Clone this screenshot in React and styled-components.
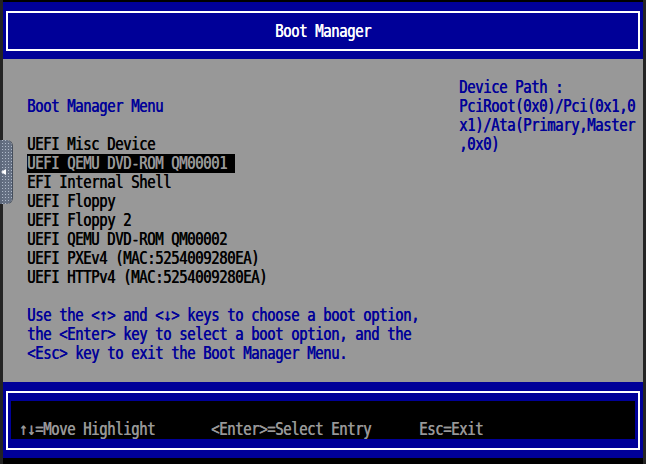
import React from "react";
import styled, { createGlobalStyle } from "styled-components";

const BLUE = "#000098";
const GRAY = "#989898";

const Global = createGlobalStyle`
  html, body { margin: 0; padding: 0; background: #242424; }
  body { width: 646px; height: 464px; overflow: hidden; }
`;

const Viewport = styled.div`
  width: 646px;
  height: 464px;
  padding-left: 3px;
  box-sizing: border-box;
  background: #242424;
  position: relative;
`;

const Screen = styled.div`
  width: 640px;
  height: 464px;
  box-sizing: border-box;
  padding-top: 2px;
  background: #000;
  display: flex;
  flex-direction: column;
  font-family: "DejaVu Sans Mono", "Liberation Mono", monospace;
  font-size: 14px;
  letter-spacing: -0.428px;
`;

const Header = styled.header`
  background: ${BLUE};
  padding: 9px 3px 8px 3px;
`;

const Frame = styled.div`
  border: 2px solid #fff;
  box-sizing: border-box;
  height: ${(p) => p.$h}px;
  display: flex;
  flex-direction: column;
  align-items: ${(p) => (p.$center ? "center" : "stretch")};
  justify-content: center;
  padding: ${(p) => p.$pad || "0"};
`;

const Glyphs = styled.span`
  display: inline-block;
  white-space: pre;
  text-shadow: 0.55px 0 0 currentColor;
  transform: translateY(-0.6px) scaleY(1.27);
  transform-origin: 50% 50%;
`;

const Line = styled.div`
  height: 19px;
  line-height: 19px;
  white-space: pre;
  width: fit-content;
  color: ${(p) => p.$color || "#000"};
  background: ${(p) => p.$bg || "transparent"};
`;

const Main = styled.main`
  background: ${GRAY};
  height: 323px;
  box-sizing: border-box;
  padding-left: 24px;
  display: grid;
  grid-template-columns: 432px 176px;
  align-items: start;
`;

const LeftCol = styled.section`
  padding-top: 38px;
  display: flex;
  flex-direction: column;
`;

const RightCol = styled.aside`
  padding-top: 19px;
  display: flex;
  flex-direction: column;
`;

const Spacer = styled.div`
  height: ${(p) => p.$rows * 19}px;
`;

const Footer = styled.footer`
  background: ${BLUE};
  padding: 9px 3px 8px 3px;
`;

const KeyBar = styled.div`
  background: #000;
  height: 38px;
  padding: 19px 0 0 8px;
  box-sizing: border-box;
  display: grid;
  grid-template-columns: 192px 208px auto;
`;

const Handle = styled.div`
  position: absolute;
  left: 0;
  top: 140px;
  width: 12px;
  height: 64px;
  border-radius: 0 6px 6px 0;
  background-color: rgba(98, 110, 130, 0.95);
  background-image: radial-gradient(circle, rgba(190, 200, 215, 0.85) 0.7px, transparent 1px);
  background-size: 3px 3px;
  background-position: 1px 2px;
  box-shadow: 1px 0 0 rgba(60, 70, 85, 0.9);
  display: flex;
  align-items: center;
  justify-content: flex-start;
`;

const HandleArrow = styled.svg`
  width: 7px;
  height: 8px;
`;

const T = ({ children, color, bg }) => (
  <Line $color={color} $bg={bg}>
    <Glyphs>{children}</Glyphs>
  </Line>
);

const items = [
  "UEFI Misc Device",
  "UEFI QEMU DVD-ROM QM00001",
  "EFI Internal Shell",
  "UEFI Floppy",
  "UEFI Floppy 2",
  "UEFI QEMU DVD-ROM QM00002",
  "UEFI PXEv4 (MAC:5254009280EA)",
  "UEFI HTTPv4 (MAC:5254009280EA)",
];

const help = [
  "Use the <\u2191> and <\u2193> keys to choose a boot option,",
  "the <Enter> key to select a boot option, and the",
  "<Esc> key to exit the Boot Manager Menu.",
];

const devicePath = [
  "Device Path :",
  "PciRoot(0x0)/Pci(0x1,0",
  "x1)/Ata(Primary,Master",
  ",0x0)",
];

const keys = ["\u2191\u2193=Move Highlight", "<Enter>=Select Entry", "Esc=Exit"];

export default function App() {
  const selected = 1;
  return (
    <>
      <Global />
      <Viewport>
        <Screen>
          <Header>
            <Frame $h={40} $center>
              <T color="#fff">Boot Manager</T>
            </Frame>
          </Header>
          <Main>
            <LeftCol>
              <T color={BLUE}>Boot Manager Menu</T>
              <Spacer $rows={1} />
              {items.map((it, i) =>
                i === selected ? (
                  <T key={it} color={GRAY} bg="#000">{it + " "}</T>
                ) : (
                  <T key={it}>{it}</T>
                )
              )}
              <Spacer $rows={1} />
              {help.map((h) => (
                <T key={h} color={BLUE}>{h}</T>
              ))}
            </LeftCol>
            <RightCol>
              {devicePath.map((d) => (
                <T key={d} color={BLUE}>{d}</T>
              ))}
            </RightCol>
          </Main>
          <Footer>
            <Frame $h={59} $pad="8px 3px 9px 3px">
              <KeyBar>
                {keys.map((k) => (
                  <T key={k} color={GRAY}>{k}</T>
                ))}
              </KeyBar>
            </Frame>
          </Footer>
        </Screen>
        <Handle>
          <HandleArrow viewBox="0 0 7 8">
            <path d="M6 1 L1 4 L6 7 Z" fill="#fff" />
          </HandleArrow>
        </Handle>
      </Viewport>
    </>
  );
}
